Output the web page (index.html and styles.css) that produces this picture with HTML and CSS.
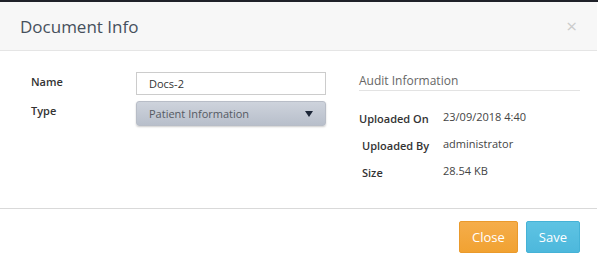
FILE: index.html
```html
<!DOCTYPE html>
<html>
  <head>
    <title>Document Info</title>
    <link rel="stylesheet" href="styles.css">
  </head>
  <body>
    <div class="topbar"></div>
    <div class="modal">
      <div class="modal-header">
        <h1 class="modal-title">Document Info</h1>
        <span class="modal-close">&times;</span>
      </div>

      <div class="modal-body">
        <div class="doc-form">
          <label class="form-label">Name</label>
          <div class="text-input">Docs-2</div>
          <label class="form-label">Type</label>
          <div class="select-input">
            <span>Patient Information</span>
            <span class="select-arrow"></span>
          </div>
        </div>

        <div class="audit">
          <h2 class="audit-title">Audit Information</h2>
          <div class="audit-grid">
            <span class="audit-label">Uploaded On</span>
            <span class="audit-value">23/09/2018 4:40</span>
            <span class="audit-label indent">Uploaded By</span>
            <span class="audit-value">administrator</span>
            <span class="audit-label indent">Size</span>
            <span class="audit-value">28.54 KB</span>
          </div>
        </div>
      </div>

      <div class="modal-footer">
        <button class="btn btn-close">Close</button>
        <button class="btn btn-save">Save</button>
      </div>
    </div>
  </body>
</html>
```

FILE: styles.css
```css
body {
  margin: 0;
  background-color: #ffffff;
  font-family: "Open Sans", Arial, sans-serif;
  color: #333333;
}

.topbar {
  height: 2px;
  background-color: #1f2129;
}

.modal {
  width: 597px;
  background-color: #ffffff;
}

.modal-header {
  display: flex;
  justify-content: space-between;
  align-items: center;
  height: 48px;
  padding: 0 20px 0 20px;
  background-color: #f7f7f7;
  border-bottom: 1px solid #e5e5e5;
}

.modal-title {
  margin: 0;
  font-size: 17px;
  font-weight: normal;
  color: #46505c;
}

.modal-close {
  font-size: 19px;
  color: #cccccc;
  line-height: 1;
}

.modal-body {
  display: flex;
  height: 158px;
  box-sizing: border-box;
  padding: 21px 0 0 31px;
  border-bottom: 1px solid #d9d9d9;
}

.doc-form {
  display: grid;
  grid-template-columns: 105px 190px;
  grid-template-rows: 23px 25px;
  row-gap: 6px;
  align-content: start;
}

.form-label {
  font-size: 11px;
  line-height: 15px;
  font-weight: 600;
  color: #333333;
  padding-top: 2px;
}

.text-input {
  height: 23px;
  box-sizing: border-box;
  border: 1px solid #cccccc;
  padding: 0 12px;
  font-size: 11px;
  line-height: 21px;
  color: #333333;
}

.select-input {
  display: flex;
  justify-content: space-between;
  align-items: center;
  height: 25px;
  box-sizing: border-box;
  padding: 0 12px 0 12px;
  border: 1px solid #b8bdc7;
  border-radius: 3px;
  background: linear-gradient(#ced3dc, #b8bfcb);
  box-shadow: 0 1px 2px rgba(0, 0, 0, 0.2);
  font-size: 11px;
  color: #555a63;
}

.select-arrow {
  width: 0;
  height: 0;
  border-left: 4px solid transparent;
  border-right: 4px solid transparent;
  border-top: 6px solid #1d2738;
}

.audit {
  width: 221px;
  margin-left: 33px;
}

.audit-title {
  margin: 0;
  padding-top: 1px;
  padding-bottom: 1px;
  border-bottom: 1px solid #e3e3e3;
  font-size: 12px;
  font-weight: normal;
  line-height: 16px;
  color: #666666;
}

.audit-grid {
  display: grid;
  grid-template-columns: 84px auto;
  grid-auto-rows: 27px;
  margin-top: 18px;
  font-size: 11px;
  line-height: 15px;
}

.audit-label {
  font-weight: 600;
  color: #333333;
  padding-top: 2px;
}

.audit-label.indent {
  padding-left: 3px;
}

.audit-value {
  color: #444444;
}

.modal-footer {
  display: flex;
  justify-content: flex-end;
  gap: 8px;
  padding: 12px 17px 0 0;
}

.btn {
  height: 32px;
  padding: 0 12px;
  border: 1px solid;
  border-radius: 2px;
  font-family: "Open Sans", Arial, sans-serif;
  font-size: 13px;
  color: #ffffff;
  cursor: pointer;
}

.btn-close {
  background: linear-gradient(#f5ad4a, #f1a232);
  border-color: #ea9a2c;
}

.btn-save {
  background: linear-gradient(#5ec3e3, #4db8dc);
  border-color: #45b2d6;
}
```
